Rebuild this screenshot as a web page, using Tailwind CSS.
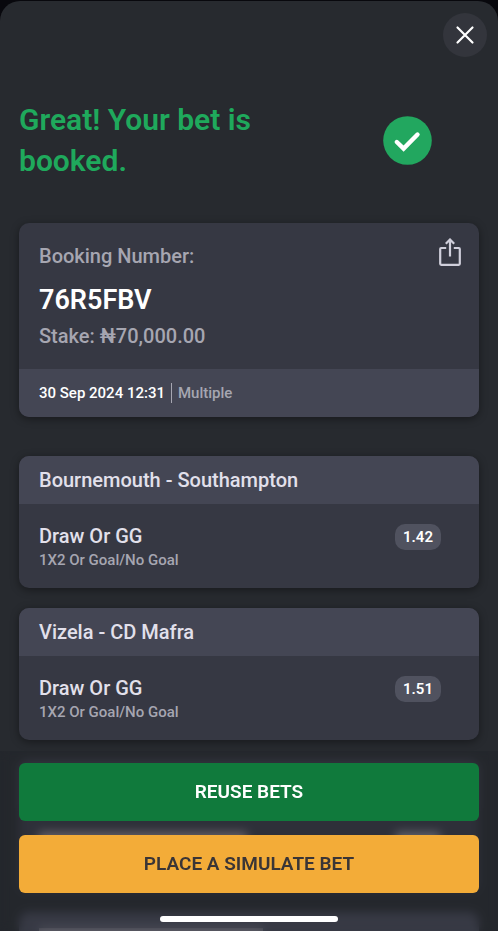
<!DOCTYPE html>
<html lang="en">
<head>
<meta charset="utf-8">
<meta name="viewport" content="width=device-width, initial-scale=1">
<title>Bet booked</title>
<script src="https://cdn.jsdelivr.net/npm/@tailwindcss/browser@4"></script>
</head>
<body class="h-screen overflow-hidden bg-[#08080d] pt-px font-['Roboto','Noto_Sans',sans-serif] font-medium">
<main class="relative flex h-full flex-col overflow-hidden rounded-t-[20px] bg-[#272a2f]">
  <header class="flex justify-end px-[11px] pt-3">
    <button type="button" aria-label="Close" class="flex size-11 items-center justify-center rounded-full bg-[#33353c] text-white">
      <svg class="size-5" viewBox="0 0 20 20" fill="none" stroke="currentColor" stroke-width="2.2" stroke-linecap="round"><path d="M2.500 2.500l15 15M17.500 2.500l-15 15"/></svg>
    </button>
  </header>

  <section class="flex items-center justify-between pt-[42px] pr-[65px] pl-[19px]">
    <h1 class="w-64 text-[30px] leading-[41px] font-semibold text-[#1fa95c]">Great! Your bet is booked.</h1>
    <svg class="size-[51px] shrink-0" viewBox="0 0 51 51" fill="none" aria-hidden="true">
      <circle cx="25.500" cy="25.500" r="24.300" fill="#22a75f"/>
      <path d="M14.800 27l6.800 6.600L35.500 19.500" stroke="#fff" stroke-width="4.400" stroke-linecap="round"/>
    </svg>
  </section>

  <div class="flex flex-col gap-5 px-[19px] pt-[42px]">
    <article class="mb-[19px] shrink-0 overflow-hidden rounded-[10px] bg-[#363843] shadow-[0_2px_8px_rgba(0,0,0,0.4)]">
      <div class="flex items-start justify-between pt-4 pr-[18px] pb-[17px] pl-5">
        <div>
          <p class="pt-[5px] text-xl leading-6 text-[#a6a6b1]">Booking Number:</p>
          <p class="pt-3 text-[27px] leading-10 font-semibold text-white">76R5FBV</p>
          <p class="text-xl leading-8 text-[#a6a6b1]">Stake: ₦70,000.00</p>
        </div>
        <button type="button" aria-label="Share" class="-mt-px text-[#d0cfdb]">
          <svg class="h-7 w-[22px]" viewBox="0 0 22 28" fill="none" stroke="currentColor" stroke-width="2.200"><path stroke-linejoin="round" d="M7.200 10H2.200a1 1 0 0 0-1 1v14.800a1 1 0 0 0 1 1h17.600a1 1 0 0 0 1-1V11a1 1 0 0 0-1-1h-5"/><path d="M11 18.500V1.500M6.800 5.700L11 1.500L15.200 5.700"/></svg>
        </button>
      </div>
      <div class="flex h-12 items-center bg-[#444654] px-5 text-[15px]">
        <time datetime="2024-09-30T12:31" class="text-white">30 Sep 2024 12:31</time>
        <span class="ml-1.5 h-5 border-l border-[#a6a6b1] pl-1.5 leading-5 text-[#a6a6b1]">Multiple</span>
      </div>
    </article>

    <article class="shrink-0 overflow-hidden rounded-[10px] bg-[#363843] shadow-[0_2px_8px_rgba(0,0,0,0.4)]">
      <h2 class="bg-[#444654] px-5 text-xl leading-[48px] text-[#e2e0eb]">Bournemouth - Southampton</h2>
      <div class="flex h-[84px] items-start justify-between pt-5 pr-[38px] pl-5">
        <div>
          <p class="text-xl leading-6 text-[#e2e0eb]">Draw Or GG</p>
          <p class="text-[15px] leading-6 text-[#a6a6b1]">1X2 Or Goal/No Goal</p>
        </div>
        <span class="rounded-[10px] bg-[#50525f] px-2 text-[15px] leading-[26px] font-semibold text-white">1.42</span>
      </div>
    </article>

    <article class="shrink-0 overflow-hidden rounded-[10px] bg-[#363843] shadow-[0_2px_8px_rgba(0,0,0,0.4)]">
      <h2 class="bg-[#444654] px-5 text-xl leading-[48px] text-[#e2e0eb]">Vizela - CD Mafra</h2>
      <div class="flex h-[84px] items-start justify-between pt-5 pr-[38px] pl-5">
        <div>
          <p class="text-xl leading-6 text-[#e2e0eb]">Draw Or GG</p>
          <p class="text-[15px] leading-6 text-[#a6a6b1]">1X2 Or Goal/No Goal</p>
        </div>
        <span class="rounded-[10px] bg-[#50525f] px-2 text-[15px] leading-[26px] font-semibold text-white">1.51</span>
      </div>
    </article>

    <!-- Rows scrolled under the action bar -->
    <div aria-hidden="true" class="h-[132px] shrink-0 rounded-[10px] bg-[#363843]">
      <div class="h-12 rounded-t-[10px] bg-[#3b3d49]"></div>
      <div class="flex justify-between pt-6 pr-[39px] pl-5">
        <span class="h-4 w-52 bg-[#8a8188]"></span>
        <span class="h-4 w-11 bg-[#85858f]"></span>
      </div>
    </div>
    <div aria-hidden="true" class="h-[132px] shrink-0 rounded-[10px] bg-[#444654] pt-4 pl-5">
      <div class="h-4 w-56 bg-[#85838d]"></div>
    </div>
  </div>

  <footer class="absolute inset-x-0 bottom-0 flex flex-col gap-3.5 bg-[#202227]/35 px-[19px] pt-3 pb-[9px] backdrop-blur-[5px]">
    <button type="button" class="h-[58px] rounded-md bg-[#107a3c] text-[19px] font-semibold text-white">REUSE BETS</button>
    <button type="button" class="h-[58px] rounded-md bg-[#f3ac38] text-[19px] font-semibold text-[#3a3536]">PLACE A SIMULATE BET</button>
    <div class="mx-auto mt-[9px] h-1.5 w-[178px] rounded-full bg-white"></div>
  </footer>
</main>
</body>
</html>
